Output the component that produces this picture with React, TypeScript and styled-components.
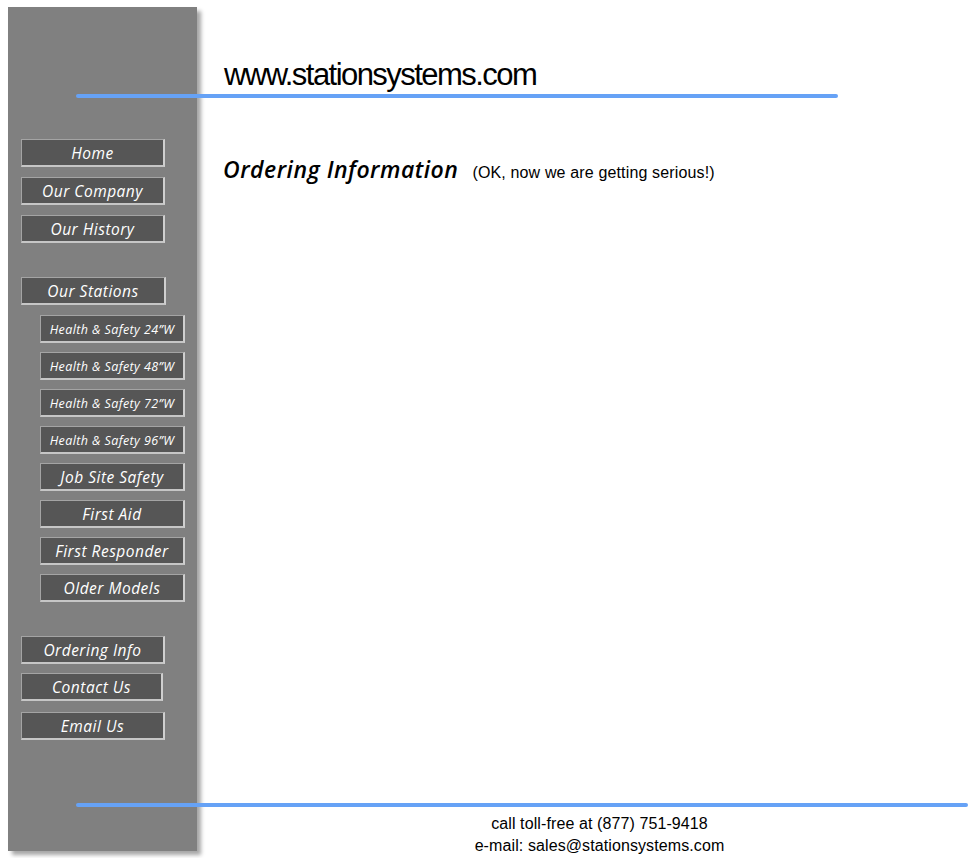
import React from 'react';
import styled, { createGlobalStyle } from 'styled-components';

const GlobalStyle = createGlobalStyle`
  html, body {
    margin: 0;
    padding: 0;
    background: #ffffff;
  }
`;

const hand = `"Open Sans", "DejaVu Sans", sans-serif`;
const plain = `"Liberation Sans", Arial, sans-serif`;

const Page = styled.div`
  display: grid;
  grid-template-columns: 189px 1fr;
  grid-template-rows: 91px 1fr 40px 51px;
  width: 970px;
  height: 858px;
  padding: 7px 0 0 8px;
  box-sizing: border-box;
`;

const Sidebar = styled.nav`
  grid-column: 1;
  grid-row: 1 / 5;
  height: 844px;
  background: #808080;
  box-shadow: 4px 4px 4px rgba(0, 0, 0, 0.35);
  padding: 132px 0 0 13px;
  box-sizing: border-box;
  display: flex;
  flex-direction: column;
`;

const Group = styled.div<{ $gap: number; $top?: number; $bottom?: number }>`
  display: flex;
  flex-direction: column;
  gap: ${p => p.$gap}px;
  margin-top: ${p => p.$top ?? 0}px;
  margin-bottom: ${p => p.$bottom ?? 0}px;
`;

const NavButton = styled.a<{ $indent?: boolean; $small?: boolean; $w?: number; $mt?: number }>`
  display: flex;
  align-items: center;
  justify-content: center;
  box-sizing: border-box;
  width: ${p => p.$w ?? 144}px;
  height: 28px;
  margin-left: ${p => (p.$indent ? 19 : 0)}px;
  margin-top: ${p => p.$mt ?? 0}px;
  padding-top: 1px;
  background: #565656;
  border-style: solid;
  border-width: 1px 2px 2px 1px;
  border-color: #a4a4a4 #cfcfcf #c6c6c6 #a4a4a4;
  color: #ffffff;
  font-family: ${hand};
  font-size: ${p => (p.$small ? 12.5 : 15.5)}px;
  font-style: italic;
  letter-spacing: ${p => (p.$small ? 0.4 : 0.5)}px;
  text-decoration: none;
  cursor: pointer;
  white-space: nowrap;
`;

const Header = styled.header`
  grid-column: 2;
  grid-row: 1;
  position: relative;
  z-index: 1;
  display: flex;
  flex-direction: column;
  justify-content: flex-end;
`;

const SiteTitle = styled.h1`
  margin: 0 0 1px 27px;
  font-family: ${plain};
  font-weight: normal;
  font-size: 31px;
  line-height: 36px;
  letter-spacing: -1.55px;
  color: #000;
`;

const Rule = styled.div<{ $from: number; $width: number }>`
  height: 4px;
  margin-left: ${p => p.$from}px;
  width: ${p => p.$width}px;
  background: #66a2f6;
  border-radius: 2px;
`;

const Content = styled.main`
  grid-column: 2;
  grid-row: 2;
  padding: 55px 0 0 26px;
  display: flex;
  align-items: baseline;
  gap: 14px;
  align-self: start;
`;

const Heading = styled.h2`
  margin: 0;
  font-family: ${hand};
  font-style: italic;
  font-weight: 600;
  font-size: 23px;
  letter-spacing: 0.5px;
  color: #000;
`;

const Aside = styled.span`
  font-family: ${plain};
  font-size: 16px;
  letter-spacing: 0.15px;
  color: #000;
`;

const BottomRule = styled.div`
  grid-column: 2;
  grid-row: 3;
  position: relative;
  z-index: 1;
  align-self: end;
`;

const Footer = styled.footer`
  grid-column: 2;
  grid-row: 4;
  padding: 6px 0 0 32px;
  display: flex;
  flex-direction: column;
  align-items: center;
  font-family: ${plain};
  font-size: 16px;
  line-height: 22px;
  letter-spacing: 0.1px;
  color: #000;
`;

const main = ['Home', 'Our Company', 'Our History'];
const stations = [
  { label: 'Health & Safety 24”W', small: true },
  { label: 'Health & Safety 48”W', small: true },
  { label: 'Health & Safety 72”W', small: true },
  { label: 'Health & Safety 96”W', small: true },
  { label: 'Job Site Safety' },
  { label: 'First Aid' },
  { label: 'First Responder' },
  { label: 'Older Models' },
];
const contact = [
  { label: 'Ordering Info', w: 144, mt: 0 },
  { label: 'Contact Us', w: 142, mt: 0 },
  { label: 'Email Us', w: 144, mt: 2 },
];

export default function App() {
  return (
    <>
      <GlobalStyle />
      <Page>
        <Sidebar>
          <Group $gap={10} $bottom={34}>
            {main.map(m => (
              <NavButton key={m}>{m}</NavButton>
            ))}
          </Group>
          <Group $gap={9}>
            <NavButton $w={145}>Our Stations</NavButton>
            {stations.map((s, i) => (
              <NavButton key={s.label} $indent $small={s.small} $w={145} $mt={i === 0 ? 1 : 0}>
                {s.label}
              </NavButton>
            ))}
          </Group>
          <Group $gap={9} $top={34}>
            {contact.map(c => (
              <NavButton key={c.label} $w={c.w} $mt={c.mt}>{c.label}</NavButton>
            ))}
          </Group>
        </Sidebar>

        <Header>
          <SiteTitle>www.stationsystems.com</SiteTitle>
          <Rule $from={-121} $width={762} />
        </Header>

        <Content>
          <Heading>Ordering Information</Heading>
          <Aside>(OK, now we are getting serious!)</Aside>
        </Content>

        <BottomRule>
          <Rule $from={-121} $width={892} />
        </BottomRule>

        <Footer>
          <span>call toll-free at (877) 751-9418</span>
          <span>e-mail: sales@stationsystems.com</span>
        </Footer>
      </Page>
    </>
  );
}
